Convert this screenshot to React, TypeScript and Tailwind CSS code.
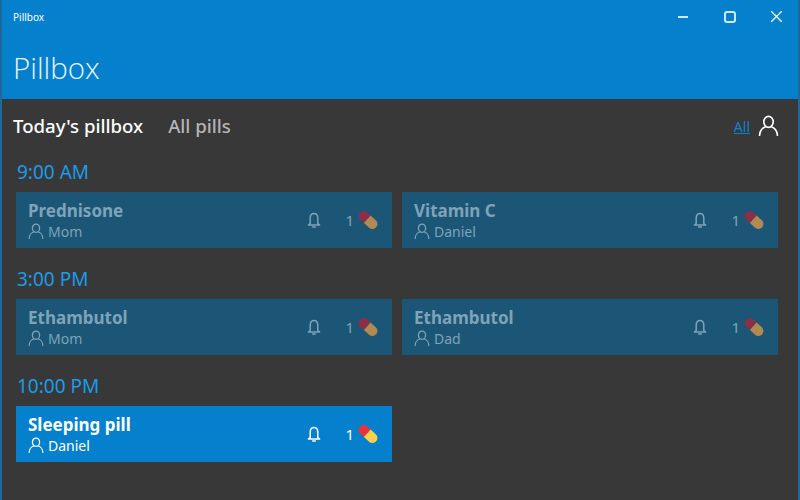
import React from "react";
import clsx from "clsx";

type Dose = {
    name: string;
    person: string;
    active?: boolean;
};

type Section = {
    time: string;
    doses: Dose[];
};

const sections: Section[] = [
    { time: "9:00 AM", doses: [{ name: "Prednisone", person: "Mom" }, { name: "Vitamin C", person: "Daniel" }] },
    { time: "3:00 PM", doses: [{ name: "Ethambutol", person: "Mom" }, { name: "Ethambutol", person: "Dad" }] },
    { time: "10:00 PM", doses: [{ name: "Sleeping pill", person: "Daniel", active: true }] },
];

const PersonIcon = ({ className }: { className?: string }) => (
    <svg viewBox="0 0 16 16" fill="none" stroke="currentColor" strokeWidth="1.25" className={className}>
        <ellipse cx="8" cy="5.2" rx="3.6" ry="4.2" />
        <path d="M1.2 15.5c0-3.6 2.6-6 4.6-6.6M14.8 15.5c0-3.6-2.6-6-4.6-6.6" strokeLinecap="round" />
    </svg>
);

const BellIcon = ({ className }: { className?: string }) => (
    <svg viewBox="0 0 14 16" fill="none" stroke="currentColor" strokeWidth="1.5" className={className}>
        <path d="M3.2 11.5V6.4C3.2 3.4 4.8 1.6 7 1.6s3.8 1.8 3.8 4.8v5.1l1.8 1.6H1.4z" strokeLinejoin="round" />
        <path d="M5.7 15h2.6" strokeLinecap="round" />
    </svg>
);

const PillIcon = ({ dim }: { dim: boolean }) => (
    <svg viewBox="0 0 22 22" className="w-[22px] h-[22px]">
        <g transform="rotate(42 11 11)">
            <path d="M10 6H5a5 5 0 0 0 0 10h5z" fill={dim ? "#8a2f48" : "#e8323c"} />
            <path d="M10 6h7a5 5 0 0 1 0 10h-7z" fill={dim ? "#b08a52" : "#fbd04a"} />
        </g>
    </svg>
);

const DoseCard = ({ dose }: { dose: Dose }) => {
    const active = !!dose.active;
    return (
        <div
            className={clsx(
                "h-[56px] flex items-center pl-[12px] pr-[13px]",
                active ? "bg-[#0480cc] text-white" : "bg-[#1b5676] text-[#7fa3b8]"
            )}
        >
            <div className="flex-1 min-w-0">
                <div className="text-[17px] font-bold leading-[22px]">{dose.name}</div>
                <div className="flex items-center gap-[4px] text-[14px] leading-[19px]">
                    <PersonIcon className="w-[16px] h-[16px]" />
                    {dose.person}
                </div>
            </div>
            <BellIcon className="w-[14px] h-[16px] mr-[24px] mb-[1px]" />
            <span className="text-[15px] mr-[3px]">1</span>
            <PillIcon dim={!active} />
        </div>
    );
};

export default function App() {
    return (
        <div className="w-[800px] h-[500px] overflow-hidden bg-[#383838] border-x-2 border-[#1c6a9c] font-['Noto_Sans',sans-serif]">
            {/* Title bar */}
            <div className="-mx-[2px] bg-[#0480cc] h-[99px] text-white">
                <div className="h-[33px] flex items-center pl-[13px] pr-[18px]">
                    <span className="text-[10px] flex-1 mt-[1px]">Pillbox</span>
                    <div className="w-[10px] h-[2px] bg-[#cfe8f8] mr-[36px]" />
                    <div className="w-[12px] h-[12px] border-[2px] border-[#cfe8f8] rounded-[3px] mr-[35px]" />
                    <svg viewBox="0 0 11 11" className="w-[11px] h-[11px]" stroke="#e3f2fb" strokeWidth="1.4">
                        <path d="M0 0l11 11M11 0L0 11" />
                    </svg>
                </div>
                <div className="mt-[15px] pl-[13px] text-[29.5px] leading-[40px] font-['Open_Sans',sans-serif] font-light text-[#e6f4fc]">
                    Pillbox
                </div>
            </div>

            {/* Tabs */}
            <div className="h-[61px] flex items-center pl-[11px] pr-[19px] pb-[8px]">
                <span className="text-[18.6px] font-medium text-white">Today's pillbox</span>
                <span className="text-[18.6px] font-medium text-[#b5b5b5] ml-[25px] flex-1">All pills</span>
                <span className="text-[14px] text-[#0a84cf] underline mr-[8px] mt-[1px]">All</span>
                <PersonIcon className="w-[21px] h-[21px] text-white" />
            </div>

            {/* Schedule */}
            <div className="pl-[14px] pr-[20px] flex flex-col gap-[19px]">
                {sections.map((section) => (
                    <div key={section.time}>
                        <div className="text-[#1b9ce8] text-[19px] leading-[24px] pl-[1px] mb-[8px]">{section.time}</div>
                        <div className="grid grid-cols-2 gap-[10px]">
                            {section.doses.map((dose, i) => (
                                <DoseCard key={i} dose={dose} />
                            ))}
                        </div>
                    </div>
                ))}
            </div>
        </div>
    );
}
